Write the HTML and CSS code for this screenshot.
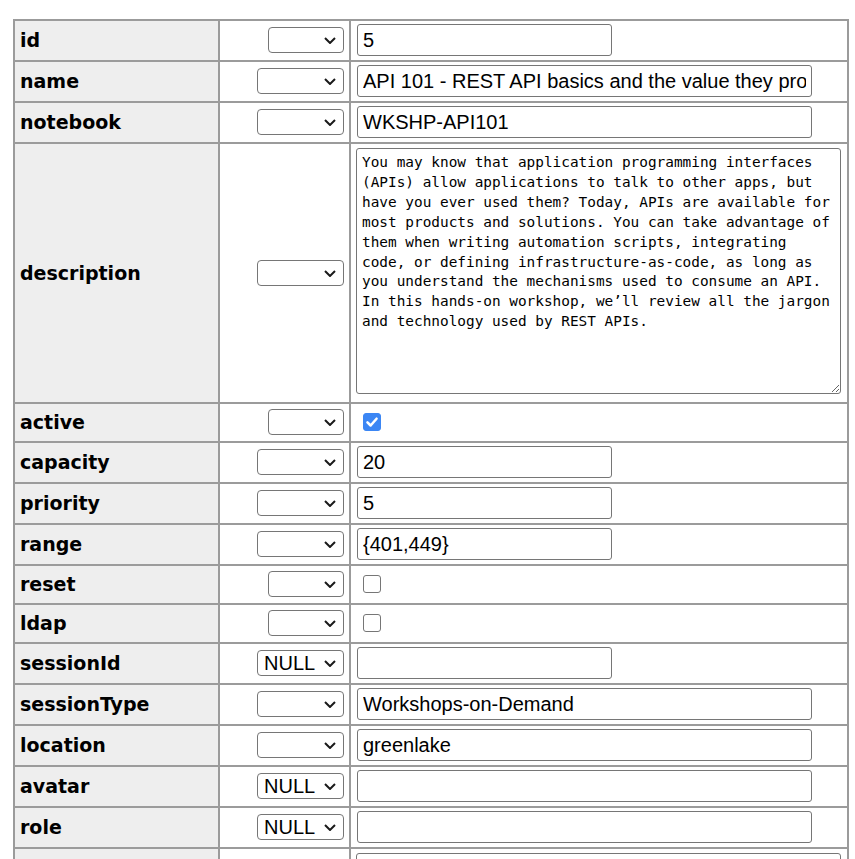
FILE: index.html
```html
<!DOCTYPE html>
<html>
<head>
<meta charset="utf-8">
<title>Edit</title>
<link rel="stylesheet" href="styles.css">
</head>
<body>
<form class="edit">
<table class="layout">
<tbody>
<tr>
  <th>id</th>
  <td class="fn"><div class="selwrap"><select class="sel sel-s"><option></option></select><svg class="chev" width="12" height="7" viewBox="0 0 12 7"><path d="M1 1L6 6L11 1"/></svg></div></td>
  <td class="val"><input class="txt txt-s" type="text" value="5"></td>
</tr>
<tr>
  <th>name</th>
  <td class="fn"><div class="selwrap"><select class="sel"><option></option></select><svg class="chev" width="12" height="7" viewBox="0 0 12 7"><path d="M1 1L6 6L11 1"/></svg></div></td>
  <td class="val"><input class="txt" type="text" value="API 101 - REST API basics and the value they provide"></td>
</tr>
<tr>
  <th>notebook</th>
  <td class="fn"><div class="selwrap"><select class="sel"><option></option></select><svg class="chev" width="12" height="7" viewBox="0 0 12 7"><path d="M1 1L6 6L11 1"/></svg></div></td>
  <td class="val"><input class="txt" type="text" value="WKSHP-API101"></td>
</tr>
<tr>
  <th>description</th>
  <td class="fn"><div class="selwrap"><select class="sel"><option></option></select><svg class="chev" width="12" height="7" viewBox="0 0 12 7"><path d="M1 1L6 6L11 1"/></svg></div></td>
  <td class="val"><textarea class="area">You may know that application programming interfaces (APIs) allow applications to talk to other apps, but have you ever used them? Today, APIs are available for most products and solutions. You can take advantage of them when writing automation scripts, integrating code, or defining infrastructure-as-code, as long as you understand the mechanisms used to consume an API. In this hands-on workshop, we’ll review all the jargon and technology used by REST APIs.</textarea></td>
</tr>
<tr>
  <th>active</th>
  <td class="fn"><div class="selwrap"><select class="sel sel-s"><option></option></select><svg class="chev" width="12" height="7" viewBox="0 0 12 7"><path d="M1 1L6 6L11 1"/></svg></div></td>
  <td class="val"><div class="chkwrap"><input class="chk chk-on" type="checkbox" checked><svg class="tick" width="17" height="17" viewBox="0 0 17 17"><path d="M4.2 8.8L7.2 11.8L12.8 5.4"/></svg></div></td>
</tr>
<tr>
  <th>capacity</th>
  <td class="fn"><div class="selwrap"><select class="sel"><option></option></select><svg class="chev" width="12" height="7" viewBox="0 0 12 7"><path d="M1 1L6 6L11 1"/></svg></div></td>
  <td class="val"><input class="txt txt-s" type="text" value="20"></td>
</tr>
<tr>
  <th>priority</th>
  <td class="fn"><div class="selwrap"><select class="sel"><option></option></select><svg class="chev" width="12" height="7" viewBox="0 0 12 7"><path d="M1 1L6 6L11 1"/></svg></div></td>
  <td class="val"><input class="txt txt-s" type="text" value="5"></td>
</tr>
<tr>
  <th>range</th>
  <td class="fn"><div class="selwrap"><select class="sel"><option></option></select><svg class="chev" width="12" height="7" viewBox="0 0 12 7"><path d="M1 1L6 6L11 1"/></svg></div></td>
  <td class="val"><input class="txt txt-s" type="text" value="{401,449}"></td>
</tr>
<tr>
  <th>reset</th>
  <td class="fn"><div class="selwrap"><select class="sel sel-s"><option></option></select><svg class="chev" width="12" height="7" viewBox="0 0 12 7"><path d="M1 1L6 6L11 1"/></svg></div></td>
  <td class="val"><div class="chkwrap"><input class="chk" type="checkbox"></div></td>
</tr>
<tr>
  <th>ldap</th>
  <td class="fn"><div class="selwrap"><select class="sel sel-s"><option></option></select><svg class="chev" width="12" height="7" viewBox="0 0 12 7"><path d="M1 1L6 6L11 1"/></svg></div></td>
  <td class="val"><div class="chkwrap"><input class="chk" type="checkbox"></div></td>
</tr>
<tr>
  <th>sessionId</th>
  <td class="fn"><div class="selwrap"><select class="sel"><option>NULL</option></select><svg class="chev" width="12" height="7" viewBox="0 0 12 7"><path d="M1 1L6 6L11 1"/></svg></div></td>
  <td class="val"><input class="txt txt-s" type="text" value=""></td>
</tr>
<tr>
  <th>sessionType</th>
  <td class="fn"><div class="selwrap"><select class="sel"><option></option></select><svg class="chev" width="12" height="7" viewBox="0 0 12 7"><path d="M1 1L6 6L11 1"/></svg></div></td>
  <td class="val"><input class="txt" type="text" value="Workshops-on-Demand"></td>
</tr>
<tr>
  <th>location</th>
  <td class="fn"><div class="selwrap"><select class="sel"><option></option></select><svg class="chev" width="12" height="7" viewBox="0 0 12 7"><path d="M1 1L6 6L11 1"/></svg></div></td>
  <td class="val"><input class="txt" type="text" value="greenlake"></td>
</tr>
<tr>
  <th>avatar</th>
  <td class="fn"><div class="selwrap"><select class="sel"><option>NULL</option></select><svg class="chev" width="12" height="7" viewBox="0 0 12 7"><path d="M1 1L6 6L11 1"/></svg></div></td>
  <td class="val"><input class="txt" type="text" value=""></td>
</tr>
<tr>
  <th>role</th>
  <td class="fn"><div class="selwrap"><select class="sel"><option>NULL</option></select><svg class="chev" width="12" height="7" viewBox="0 0 12 7"><path d="M1 1L6 6L11 1"/></svg></div></td>
  <td class="val"><input class="txt" type="text" value=""></td>
</tr>
<tr>
  <th></th>
  <td class="fn"><div class="selwrap"><select class="sel"><option>NULL</option></select><svg class="chev" width="12" height="7" viewBox="0 0 12 7"><path d="M1 1L6 6L11 1"/></svg></div></td>
  <td class="val"><textarea class="area"></textarea></td>
</tr>
</tbody>
</table>
</form>
</body>
</html>
```
FILE: styles.css
```css
html, body {
  margin: 0;
  padding: 0;
  background: #fff;
}

.edit {
  padding: 19px 0 0 13px;
}

.layout {
  border-collapse: separate;
  border-spacing: 0;
  border-top: 2px solid #9b9b9b;
  border-left: 2px solid #9b9b9b;
}

.layout th,
.layout td {
  box-sizing: border-box;
  border-right: 2px solid #9b9b9b;
  border-bottom: 2px solid #9b9b9b;
  vertical-align: middle;
}

.layout th {
  width: 205px;
  padding: 7px 5px 8px 5px;
  background: #eeeeee;
  text-align: left;
  font-family: "DejaVu Sans", Verdana, sans-serif;
  font-weight: bold;
  font-size: 19px;
  line-height: 22px;
  color: #000;
}

.layout td {
  padding: 3px 5px 4px 5px;
}

.layout td.fn {
  width: 131px;
}

.layout td.val {
  width: 498px;
}

.selwrap {
  position: relative;
  display: flex;
  justify-content: flex-end;
}

.sel {
  display: block;
  box-sizing: border-box;
  -webkit-appearance: none;
  appearance: none;
  margin: 0;
  width: 87px;
  height: 26px;
  padding: 0 0 0 6px;
  font-family: "Liberation Sans", Arial, sans-serif;
  font-size: 20px;
  line-height: 24px;
  color: #000;
  background-color: #fff;
  border: 1px solid #767676;
  border-radius: 4px;
}

.sel-s {
  width: 76px;
}

.chev {
  position: absolute;
  right: 8px;
  top: 10px;
  fill: none;
  stroke: #1a1a1a;
  stroke-width: 2;
  pointer-events: none;
}

.txt {
  display: block;
  box-sizing: border-box;
  margin: 0 0 0 1px;
  width: 455px;
  height: 32px;
  padding: 0 5px;
  font-family: "Liberation Sans", Arial, sans-serif;
  font-size: 20px;
  color: #000;
  background: #fff;
  border: 1px solid #767676;
  border-radius: 3px;
}

.txt-s {
  width: 255px;
}

.area {
  display: block;
  box-sizing: border-box;
  margin: 1px 0 4px 0;
  width: 485px;
  height: 246px;
  padding: 4px 5px;
  font-family: "DejaVu Sans Mono", monospace;
  font-size: 14.4px;
  line-height: 19.9px;
  color: #000;
  background: #fff;
  border: 1px solid #767676;
  border-radius: 3px;
}

.chkwrap {
  position: relative;
  width: 18px;
  height: 18px;
  margin: 0 0 0 7px;
}

.chk {
  display: block;
  box-sizing: border-box;
  -webkit-appearance: none;
  appearance: none;
  width: 18px;
  height: 18px;
  margin: 0;
  background: #fff;
  border: 1px solid #767676;
  border-radius: 3px;
}

.chk-on {
  background: #3b86f4;
  border-color: #3b86f4;
}

.tick {
  position: absolute;
  left: 0;
  top: 0;
  width: 18px;
  height: 18px;
  fill: none;
  stroke: #fff;
  stroke-width: 2.4;
  stroke-linecap: round;
  stroke-linejoin: round;
  pointer-events: none;
}
```
